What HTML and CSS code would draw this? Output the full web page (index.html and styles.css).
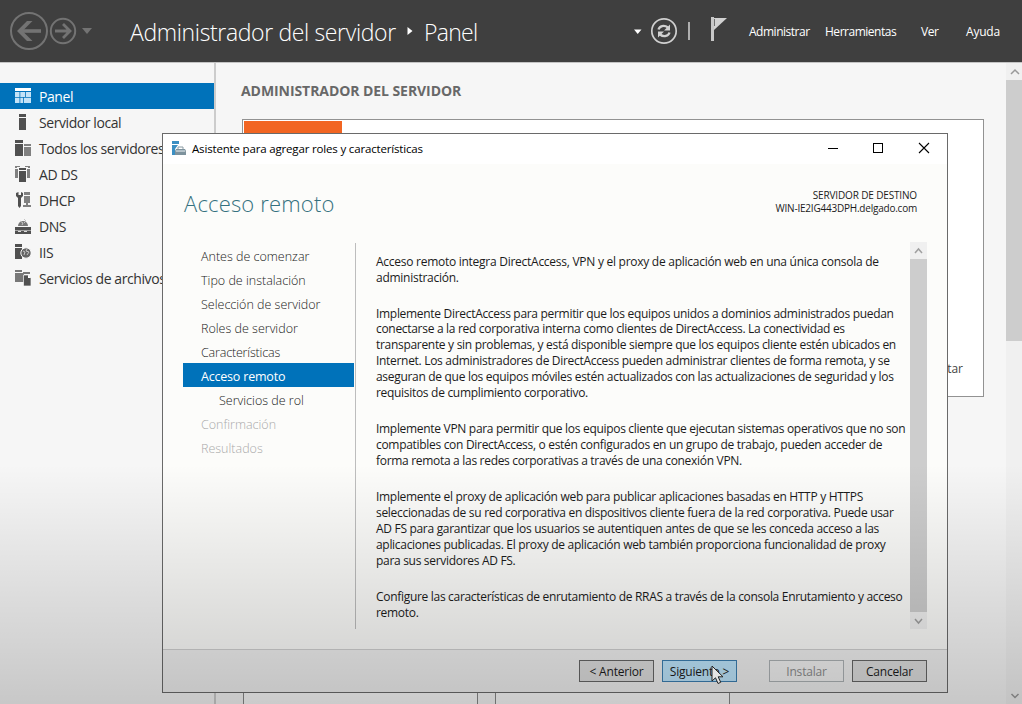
FILE: index.html
```html
<!DOCTYPE html>
<html lang="es">
<head>
<meta charset="utf-8">
<title>Administrador del servidor</title>
<link rel="stylesheet" href="styles.css">
</head>
<body>
<div class="desktop">
  <header class="topbar">
    <svg class="nav-arrows" width="100" height="62" viewBox="0 0 100 62" fill="none" stroke="#737373">
      <circle cx="29" cy="31" r="18" stroke-width="2"/>
      <path d="M41 31H20" stroke-width="3.6"/>
      <path d="M17 31L27 21H32.500L22.500 31L32.500 41H27Z" fill="#737373" stroke="none"/>
      <circle cx="63" cy="31" r="12.2" stroke-width="2"/>
      <path d="M55 31H69M63 24L70 31L63 38" stroke-width="2.8"/>
      <path d="M82 28H92L87 34Z" fill="#737373" stroke="none"/>
    </svg>
    <h1 class="crumb"><span class="crumb-root">Administrador del servidor</span><svg class="crumb-sep" width="6" height="10" viewBox="0 0 6 10"><path d="M0.500 1L5.500 5L0.500 9Z" fill="#fff"/></svg><span class="crumb-page">Panel</span></h1>
    <svg class="tools" width="102" height="62" viewBox="0 0 102 62" fill="none">
      <path d="M4 29.500H11.500L7.700 34Z" fill="#fff"/>
      <circle cx="34" cy="31" r="12.200" stroke="#d0d0d0" stroke-width="1.700"/>
      <path d="M28.500 29.500C29.500 26 34 24.500 38 27.500M39.500 32.500C38.500 36 34 37.500 30 34.500" stroke="#d0d0d0" stroke-width="2.300"/>
      <path d="M40 24.500V30.500H34ZM28 37.500V31.500H34Z" fill="#d0d0d0"/>
      <path d="M59 22V40" stroke="#bcbcbc" stroke-width="1.800"/>
      <path d="M82.500 17V41" stroke="#c8c8c8" stroke-width="3"/>
      <path d="M84 18H97L84 30Z" fill="#d2d2d2"/>
      <path d="M84.500 19V26" stroke="#555" stroke-width=".8"/>
    </svg>
    <nav class="menu"><span class="m1">Administrar</span><span class="m2">Herramientas</span><span class="m3">Ver</span><span class="m4">Ayuda</span></nav>
  </header>
  <div class="work">
    <aside class="side">
      <div class="item on"><svg width="16" height="16" viewBox="0 0 16 16" fill="#c4e3f7"><path fill="#fff" d="M0 0H16V3H0Z"/><path d="M0 4H4.500V9H0ZM5.300 4H10V9H5.300ZM10.800 4H16V9H10.800ZM0 9.800H4.500V15H0ZM5.300 9.800H8V15H5.300ZM8.800 9.800H16V15H8.800Z"/></svg><span class="i1">Panel</span></div>
      <div class="item"><svg width="16" height="16" viewBox="0 0 16 16" fill="#505050"><path d="M4 0H11V3H4ZM4 4H11V16H4Z"/></svg><span class="i2">Servidor local</span></div>
      <div class="item"><svg width="16" height="16" viewBox="0 0 16 16" fill="#505050"><path d="M0 0H8V3H0ZM0 4H8V16H0Z"/><path fill="#808080" d="M9 4H16V6H9ZM9 7H16V16H9Z"/></svg><span class="i3">Todos los servidores</span></div>
      <div class="item"><svg width="16" height="16" viewBox="0 0 16 16" fill="#505050"><path fill="#808080" d="M0 0H5V1H2V2H0ZM10 0H15V2H13V1H10ZM0 3H3V12H0ZM12 3H15V12H12Z"/><path d="M4 2H11V4H4ZM4 5H11V16H4Z"/></svg><span class="i4">AD DS</span></div>
      <div class="item"><svg width="16" height="16" viewBox="0 0 16 16" fill="#505050"><path d="M1 1V4L3 6V14L4.500 16L6 14V6L8 4V1L6 0V3H3.500V0Z"/><path fill="#808080" d="M9 0H15V3H9ZM9 4H15V11H9ZM11 11H13V13H16V15H8V13H11Z"/></svg><span class="i5">DHCP</span></div>
      <div class="item"><svg width="16" height="16" viewBox="0 0 16 16" fill="#505050"><path fill="#777" d="M3 8A5 5 0 1 1 13 8Z"/><path stroke="#c5c5c5" d="M5 3L8 5L7 7M9 1L11 3L9 5" fill="none"/><path d="M0 9H16V12H0ZM0 12.500H16V16H0Z"/><path fill="#ddd" d="M3 13H6V14H3ZM9 13H12V14H9Z"/></svg><span class="i6">DNS</span></div>
      <div class="item"><svg width="16" height="16" viewBox="0 0 16 16" fill="#505050"><path d="M0 0H7V3H0ZM0 4H7V15H0Z"/><circle cx="11" cy="9" r="5.200" fill="#666" stroke="#f6f6f6"/><path stroke="#c5c5c5" d="M8 7L10 8L9 11M12 5L11 7L14 8L12 11" fill="none"/></svg><span class="i7">IIS</span></div>
      <div class="item"><svg width="16" height="16" viewBox="0 0 16 16" fill="#777"><path d="M0 0H7V2H0ZM0 3H9V12H0ZM8 2H15V4H8Z"/><path fill="#505050" stroke="#f6f6f6" stroke-width=".7" d="M8.500 5H13L16 8V16H8.500Z"/><path fill="#fff" d="M13 5V8H16Z"/></svg><span class="i8">Servicios de archivos</span></div>
    </aside>
    <main class="main">
      <h2 class="head">ADMINISTRADOR DEL SERVIDOR</h2>
      <section class="welcome"><div class="orange"></div><span class="hide-link">Ocultar</span></section>
      <section class="tiles"><div class="tile"></div><div class="tile"></div></section>
    </main>
    <div class="bar page-bar">
      <svg width="16" height="17" viewBox="0 0 16 17"><path d="M5 11L9 7L13 11" fill="none" stroke="#999" stroke-width="1.500"/></svg>
      <div class="thumb"></div>
      <svg class="down" width="16" height="17" viewBox="0 0 16 17"><path d="M5.500 7L9 10.500L12.500 7" fill="none" stroke="#999" stroke-width="1.500"/></svg>
    </div>
  </div>

  <div class="dialog">
    <div class="titlebar">
      <svg width="16" height="16" viewBox="0 0 16 16"><path fill="#3c8fc3" d="M1 1H8V4H1ZM1 5H7L4 9V15H1Z"/><path fill="#7d929d" d="M5 9H14L15 11V15H4V11Z"/><path d="M7 9V7H12V9M4 11.500H15" fill="none" stroke="#8a9aa2"/><path d="M5 11H14" stroke="#e5eef3"/></svg>
      <span class="caption">Asistente para agregar roles y características</span>
      <svg class="winbtns" width="104" height="30" viewBox="0 0 104 30" fill="none" stroke="#000"><path d="M1 14.500H11"/><rect x="46.500" y="9.500" width="9" height="9"/><path d="M92 9L102 19M102 9L92 19" stroke-width="1.100"/></svg>
    </div>
    <div class="intro"><h3 class="page-title">Acceso remoto</h3>
      <div class="dest"><div class="d1">SERVIDOR DE DESTINO</div><div class="d2">WIN-IE2IG443DPH.delgado.com</div></div></div>
    <div class="columns">
      <nav class="steps">
        <div class="s1">Antes de comenzar</div><div class="s2">Tipo de instalación</div><div class="s3">Selección de servidor</div><div class="s4">Roles de servidor</div><div class="s5">Características</div><div class="current">Acceso remoto</div><div class="sub">Servicios de rol</div><div class="off">Confirmación</div><div class="off">Resultados</div>
      </nav>
      <article class="copy">
        <p class="lead">Acceso remoto integra DirectAccess, VPN y el proxy de aplicación web en una única consola de<br>administración.</p>
        <p>Implemente DirectAccess para permitir que los equipos unidos a dominios administrados puedan<br>conectarse a la red corporativa interna como clientes de DirectAccess. La conectividad es<br>transparente y sin problemas, y está disponible siempre que los equipos cliente estén ubicados en<br>Internet. Los administradores de DirectAccess pueden administrar clientes de forma remota, y se<br>aseguran de que los equipos móviles estén actualizados con las actualizaciones de seguridad y los<br>requisitos de cumplimiento corporativo.</p>
        <p>Implemente VPN para permitir que los equipos cliente que ejecutan sistemas operativos que no son<br>compatibles con DirectAccess, o estén configurados en un grupo de trabajo, pueden acceder de<br>forma remota a las redes corporativas a través de una conexión VPN.</p>
        <p>Implemente el proxy de aplicación web para publicar aplicaciones basadas en HTTP y HTTPS<br>seleccionadas de su red corporativa en dispositivos cliente fuera de la red corporativa. Puede usar<br>AD FS para garantizar que los usuarios se autentiquen antes de que se les conceda acceso a las<br>aplicaciones publicadas. El proxy de aplicación web también proporciona funcionalidad de proxy<br>para sus servidores AD FS.</p>
        <p>Configure las características de enrutamiento de RRAS a través de la consola Enrutamiento y acceso<br>remoto.</p>
      </article>
      <div class="bar copy-bar">
        <svg width="17" height="17" viewBox="0 0 17 17"><path d="M5 11L8.500 7L12 11" fill="none" stroke="#a0a0a0" stroke-width="1.500"/></svg>
        <div class="thumb"></div>
        <svg width="17" height="17" viewBox="0 0 17 17"><path d="M5 7L8.500 11L12 7" fill="none" stroke="#a0a0a0" stroke-width="1.500"/></svg>
      </div>
    </div>
    <footer class="actions">
      <button class="btn">&lt; Anterior</button><button class="btn next">Siguiente &gt;</button><button class="btn disabled">Instalar</button><button class="btn">Cancelar</button>
    </footer>
  </div>
  <div class="shade"></div>
  <svg class="cursor" width="13" height="20" viewBox="0 0 13 20"><path d="M1 1V16L4.500 12.800L7 18.500L9.700 17.300L7.200 11.800H12Z" fill="#e6e6e6" stroke="#222"/></svg>
</div>
</body>
</html>
```
FILE: styles.css
```css
* { box-sizing: border-box; }
body { margin: 0; font-family: "Open Sans", "Noto Sans", sans-serif; font-size: 12px; color: #1b1b1b; }
h1, h2, h3, p { margin: 0; font-weight: 400; }
svg { display: block; flex: none; }
span, h2, h3 { white-space: nowrap; }
.desktop { position: relative; width: 1022px; height: 704px; overflow: hidden; background: #f6f6f6; display: flex; flex-direction: column; }

.topbar { height: 63px; flex: none; display: flex; background: #3f3f3f; border-bottom: 1px solid #c4c4c4; color: #fff; }
.crumb { display: flex; width: 500px; padding-left: 30px; font-size: 23px; line-height: 65px; font-weight: 300; }
.crumb-root { width: 277px; letter-spacing: -.36px; }
.crumb-sep { margin-top: 26px; }
.crumb-page { margin-left: 11px; letter-spacing: -.7px; }
.tools { margin-left: 30px; }
.menu { display: flex; line-height: 64px; margin-left: 17px; letter-spacing: -.48px; }
.m1 { width: 76px; }
.m2 { width: 96px; }
.m3 { width: 45px; }
.m4 { letter-spacing: -.2px; }

.work { flex: 1; display: flex; min-height: 0; }
.side { width: 216px; flex: none; padding-top: 20px; border-right: 2px solid #ccc; }
.item { height: 26px; display: flex; align-items: center; padding-left: 15px; gap: 8px; font-size: 14px; color: #333; letter-spacing: -.42px; }
.item span { padding-top: 1px; }
.on { background: #0072ba; color: #fff; }
.main { flex: 1; min-width: 0; padding: 18px 0 0 26px; }
.head { margin-left: -1px; font-size: 14px; line-height: 20px; letter-spacing: -.07px; font-weight: 700; color: #686868; }
.welcome { position: relative; width: 742px; height: 278px; margin-top: 18px; border: 1px solid #929292; background: #fff; padding: 1px; }
.orange { width: 98px; height: 60px; background: #f26522; }
.hide-link { position: absolute; right: 20px; bottom: 18px; color: #444; line-height: 18px; }
.tiles { display: flex; gap: 17px; margin: 60px 0 0 1px; }
.tile { width: 235px; height: 280px; border: 1px solid #888; background: #fafafa; }

.bar { display: flex; flex-direction: column; background: #f0f0f0; flex: none; }
.page-bar { width: 16px; }
.page-bar .thumb { height: 261px; }
.page-bar .down { margin-top: auto; }
.thumb { background: #cdcdcd; }

.dialog { position: absolute; left: 162px; top: 133px; width: 786px; height: 560px; border: 1px solid #6a6a6a; background: #fcfcfa; display: flex; flex-direction: column; }
.titlebar { height: 30px; flex: none; background: #fff; display: flex; padding-left: 8px; line-height: 30px; color: #000; }
.titlebar > svg:first-child { margin-top: 6px; }
.caption { margin-left: 5px; font-size: 11.5px; letter-spacing: -.17px; }
.winbtns { margin-left: auto; margin-right: 16px; }
.intro { height: 78px; flex: none; display: flex; justify-content: space-between; padding: 23px 30px 0 21px; }
.page-title { font-size: 22px; line-height: 32px; font-weight: 300; color: #35717f; letter-spacing: .17px; }
.dest { font-size: 10px; line-height: 13px; text-align: right; padding-top: 2px; }
.d1 { letter-spacing: -.15px; }
.d2 { letter-spacing: -.22px; }
.columns { flex: none; height: 407px; display: flex; padding: 0 0 20px 20px; }
.steps { width: 173px; flex: none; margin-top: 1px; border-right: 1px solid #bdbdbd; line-height: 24px; font-size: 12.5px; font-weight: 300; color: #222; padding-right: 1px; }
.steps div { height: 24px; padding: 2px 0 0 18px; }
.steps .s5 { letter-spacing: -.18px; }
.steps .current { background: #0072ba; color: #fff; font-weight: 400; letter-spacing: -.2px; }
.steps .sub { padding-left: 36px; }
.steps .off { color: #aaa; }
.copy { width: 554px; flex: none; padding: 11.6px 0 0 20px; line-height: 15.96px; white-space: nowrap; letter-spacing: -.305px; }
.copy p { margin-bottom: 20px; }
.copy .lead { letter-spacing: -.265px; }
.copy-bar { width: 17px; }
.copy-bar .thumb { flex: 1; }
.actions { flex: 1; border-top: 1px solid #d0d0d0; background: #f0f0f0; display: flex; padding: 10px 0 0 416px; }
.btn { width: 75px; height: 22px; padding: 1px 0 0; margin: 0 8px 0 0; border: 1px solid #666; background: #dedede; font: 12px/19px "Open Sans", sans-serif; color: #1b1b1b; letter-spacing: -.2px; }
.next { margin-right: 32px; background: #bee6fd; border-color: #3c7fb1; }
.disabled { background: #f2f2f2; border-color: #adb2b5; color: #8c8c8c; }

.shade { position: absolute; left: 0; right: 0; top: 464px; bottom: 0; background: linear-gradient(rgba(0,0,0,0), rgba(0,0,0,.19)); pointer-events: none; }
.cursor { position: absolute; left: 711px; top: 665px; }
```
